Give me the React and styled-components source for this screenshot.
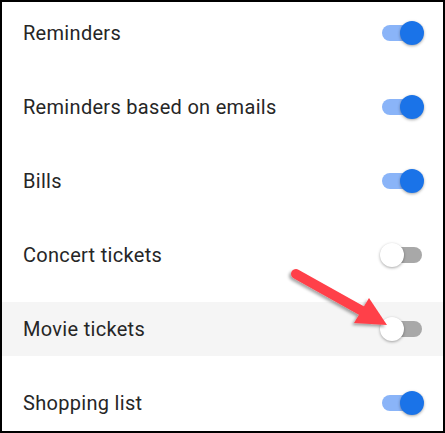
import React from 'react';
import styled, { createGlobalStyle } from 'styled-components';

const GlobalStyle = createGlobalStyle`
  html, body {
    margin: 0;
    padding: 0;
    background: #fff;
  }
  * {
    box-sizing: border-box;
  }
`;

const items = [
  { label: 'Reminders', on: true },
  { label: 'Reminders based on emails', on: true },
  { label: 'Bills', on: true },
  { label: 'Concert tickets', on: false },
  { label: 'Movie tickets', on: false, highlight: true },
  { label: 'Shopping list', on: true },
];

function App() {
  return (
    <>
      <GlobalStyle />
      <Frame>
        <List>
          {items.map((item) => (
            <Row key={item.label} $highlight={item.highlight}>
              <Label>{item.label}</Label>
              <Switch>
                <Track $on={item.on} />
                <Thumb $on={item.on} />
              </Switch>
            </Row>
          ))}
        </List>
        <Arrow viewBox="0 0 445 433">
          <defs>
            <filter id="shadow" x="-20%" y="-20%" width="140%" height="140%">
              <feDropShadow dx="-2" dy="2" stdDeviation="1.5" floodColor="#000" floodOpacity="0.35" />
            </filter>
          </defs>
          <g filter="url(#shadow)" fill="#ff4049" stroke="none">
            <line x1="296" y1="274" x2="364" y2="312" stroke="#ff4049" strokeWidth="10" strokeLinecap="round" />
            <polygon points="369,298 354,323 387,325" />
          </g>
        </Arrow>
      </Frame>
    </>
  );
}

export default App;

const Frame = styled.div`
  position: relative;
  width: 445px;
  height: 433px;
  border: 2px solid #000;
  background: #fff;
  font-family: Roboto, 'Liberation Sans', Arial, sans-serif;
`;

const List = styled.div`
  display: flex;
  flex-direction: column;
  gap: 20px;
  padding-top: 4px;
`;

const Row = styled.div`
  height: 54px;
  display: flex;
  align-items: center;
  justify-content: space-between;
  padding: 0 19px 0 21px;
  background: ${(p) => (p.$highlight ? '#f5f5f5' : 'transparent')};
`;

const Label = styled.span`
  font-size: 20px;
  color: #262626;
  letter-spacing: 0.3px;
`;

const Switch = styled.div`
  position: relative;
  width: 44px;
  height: 24px;
`;

const Track = styled.div`
  position: absolute;
  left: 2px;
  right: 2px;
  top: 4px;
  height: 16px;
  border-radius: 8px;
  background: ${(p) => (p.$on ? '#8ab4f8' : '#a8a8a8')};
`;

const Thumb = styled.div`
  position: absolute;
  top: 0;
  left: ${(p) => (p.$on ? '20px' : '0')};
  width: 24px;
  height: 24px;
  border-radius: 50%;
  background: ${(p) => (p.$on ? '#1a73e8' : '#ffffff')};
  box-shadow: 0 1px 3px rgba(0, 0, 0, 0.35);
`;

const Arrow = styled.svg`
  position: absolute;
  left: -2px;
  top: -2px;
  width: 445px;
  height: 433px;
  pointer-events: none;
`;
